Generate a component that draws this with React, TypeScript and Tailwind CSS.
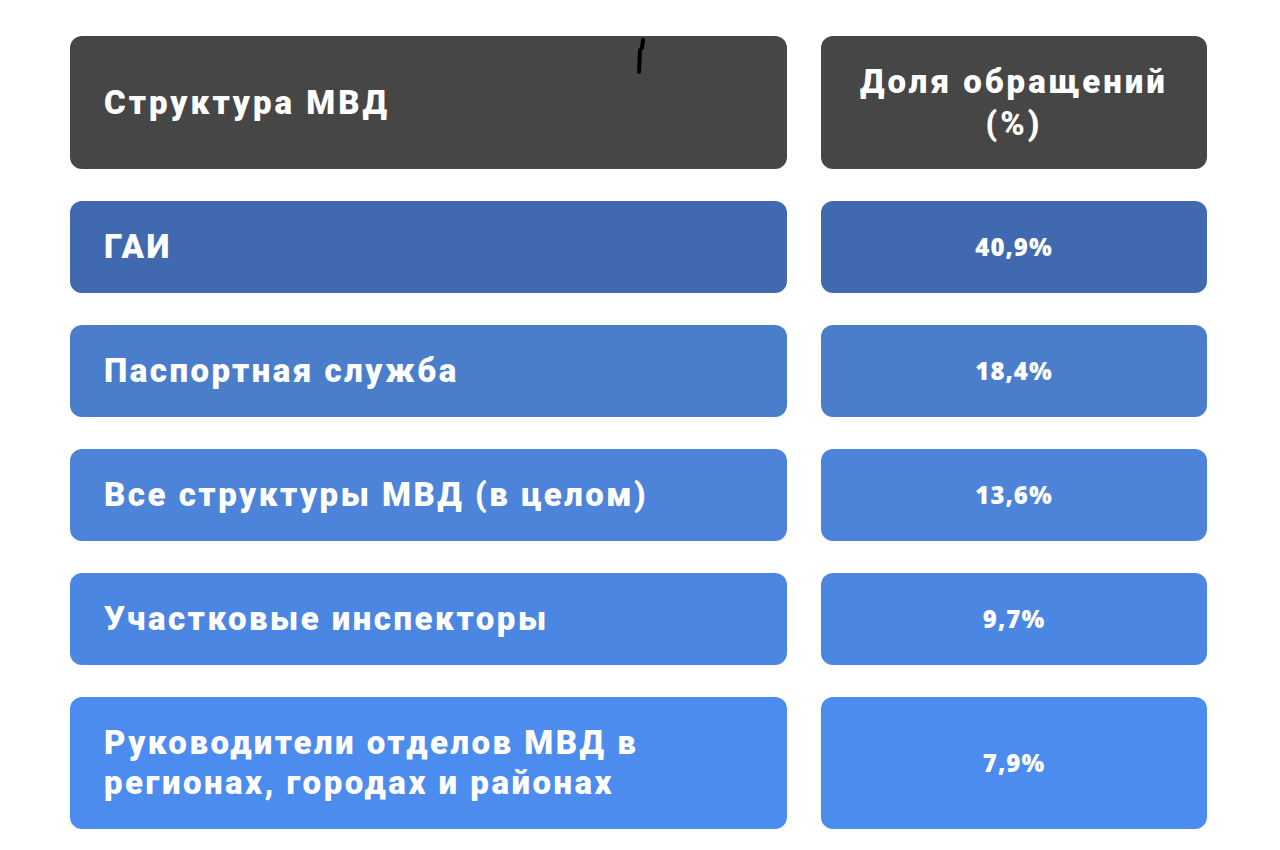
const rows = [
  { label: 'ГАИ', value: '40,9%', bg: 'bg-[#4169af]', h: 'h-[92px]' },
  { label: 'Паспортная служба', value: '18,4%', bg: 'bg-[#4a7ecb]', h: 'h-[92px]' },
  { label: 'Все структуры МВД (в целом)', value: '13,6%', bg: 'bg-[#4d83d9]', h: 'h-[92px]' },
  { label: 'Участковые инспекторы', value: '9,7%', bg: 'bg-[#4b86e3]', h: 'h-[92px]' },
  { label: 'Руководители отделов МВД в регионах, городах и районах', value: '7,9%', bg: 'bg-[#4c8cef]', h: 'h-[132px]' },
];

export default function App() {
  return (
    <div className="min-h-[850px] w-[1280px] bg-white pt-[36px] pl-[70px] font-['Roboto',sans-serif]">
      <div className="grid grid-cols-[717px_386px] gap-x-[34px] gap-y-[32px]">
        <div className="relative flex h-[133px] items-center rounded-xl bg-[#464646] px-[34px]">
          <span className="text-[33px] font-black tracking-[3px] text-white">Структура МВД</span>
          {/* pen mark on the scan */}
          <svg className="absolute left-[566px] top-[2px]" width="12" height="38" viewBox="0 0 12 38">
            <path d="M7 2 L6 10 M4 12 L3 34" stroke="#000" strokeWidth="4" strokeLinecap="round" fill="none" />
          </svg>
        </div>
        <div className="flex h-[133px] items-center justify-center rounded-xl bg-[#464646] text-center">
          <span className="text-[33px] font-black leading-[42px] tracking-[3px] text-white">
            Доля обращений
            <br />
            (%)
          </span>
        </div>
        {rows.map((r) => (
          <>
            <div key={r.label} className={`flex items-center rounded-xl px-[34px] ${r.bg} ${r.h}`}>
              <span className="max-w-[640px] text-[33px] font-black leading-[40px] tracking-[2.5px] text-white">{r.label}</span>
            </div>
            <div key={r.value} className={`flex items-center justify-center rounded-xl ${r.bg} ${r.h}`}>
              <span className="font-['Open_Sans',sans-serif] text-[24px] font-extrabold tracking-[1px] text-white">{r.value}</span>
            </div>
          </>
        ))}
      </div>
    </div>
  );
}
